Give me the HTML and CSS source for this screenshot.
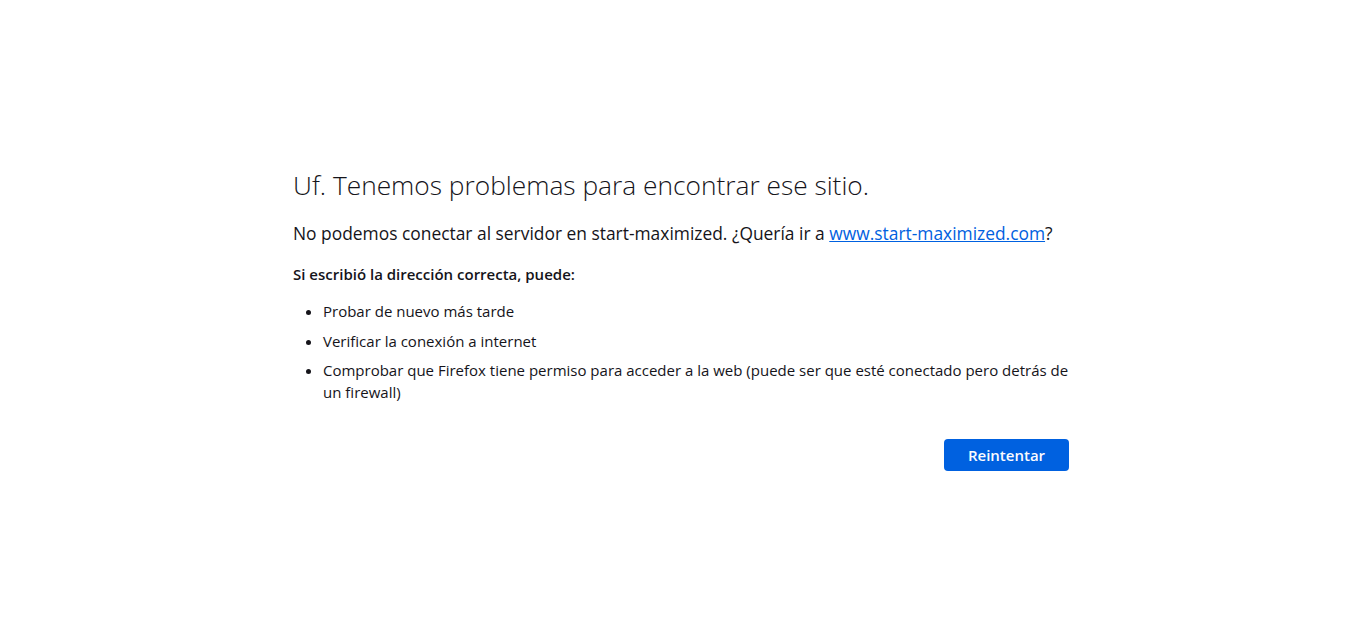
FILE: index.html
```html
<!DOCTYPE html>
<html lang="es">
<head>
<meta charset="utf-8">
<title>Problema al cargar la página</title>
<link rel="stylesheet" href="styles.css">
</head>
<body>
<main class="container">
  <h1 class="title">Uf. Tenemos problemas para encontrar ese sitio.</h1>
  <p class="short-desc">No podemos conectar al servidor en start-maximized. ¿Quería ir a <a class="link" href="#">www.start-maximized.com</a>?</p>
  <p class="hint"><strong>Si escribió la dirección correcta, puede:</strong></p>
  <ul class="tips">
    <li>Probar de nuevo más tarde</li>
    <li>Verificar la conexión a internet</li>
    <li>Comprobar que Firefox tiene permiso para acceder a la web (puede ser que esté conectado pero detrás de un firewall)</li>
  </ul>
  <div class="actions">
    <button class="primary" type="button">Reintentar</button>
  </div>
</main>
</body>
</html>
```

FILE: styles.css
```css
html, body {
  margin: 0;
  height: 100%;
}
body {
  background: #ffffff;
  color: #15141a;
  font-family: "Open Sans", "Noto Sans", sans-serif;
  font-size: 15px;
  display: flex;
  align-items: center;
  justify-content: center;
}
.container {
  width: 780px;
  box-sizing: border-box;
  padding-bottom: 4px;
}
.title {
  font-size: 26.3px;
  font-weight: 300;
  line-height: 1.3;
  margin: 0 0 19px;
}
.short-desc {
  font-size: 17.4px;
  margin: 0 0 18px;
  line-height: 1.4;
}
.link {
  color: #0061e0;
}
.hint {
  margin: 0 0 15px;
  line-height: 1.48;
}
.hint strong {
  font-weight: 600;
}
.tips {
  margin: 0;
  padding-inline-start: 30px;
  line-height: 1.48;
}
.tips li {
  margin: 7px 0;
}
.actions {
  display: flex;
  justify-content: flex-end;
  margin-top: 36px;
}
.primary {
  margin: 0 4px 0 0;
  height: 32px;
  min-width: 125px;
  padding: 0 15px;
  border: none;
  border-radius: 4px;
  background: #0061e0;
  color: #fbfbfe;
  font-family: inherit;
  font-size: 15px;
  font-weight: 600;
}
```
